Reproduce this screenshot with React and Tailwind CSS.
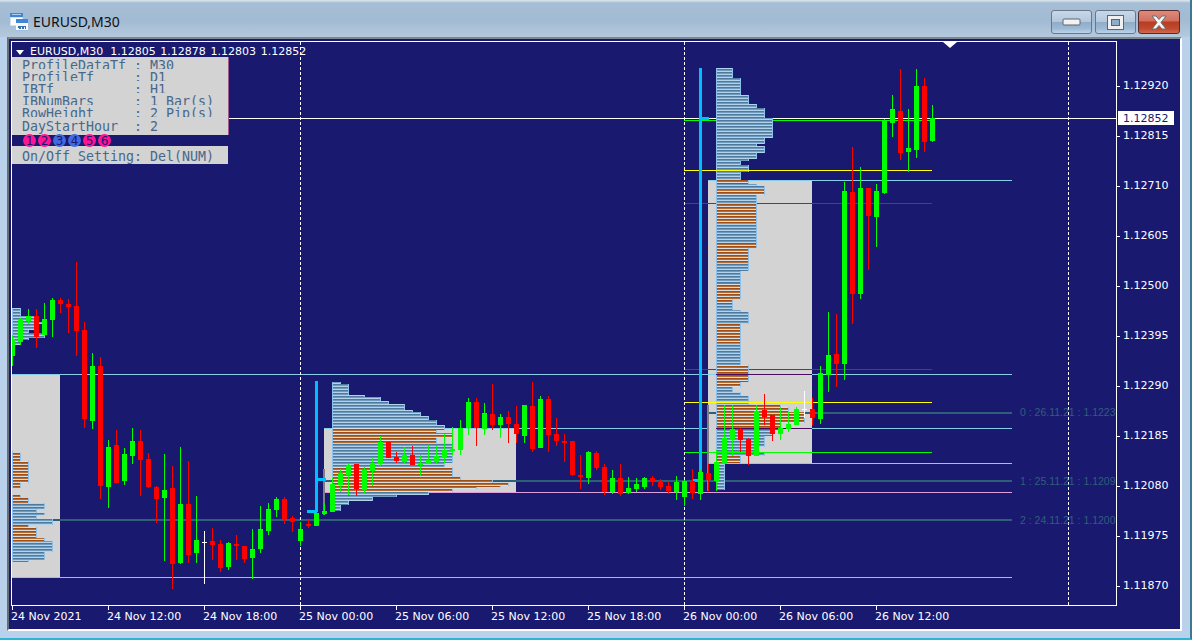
const C = [
['g',335,339,356,366],['g',318,320,342,345],['g',309,316,321,324],['r',309,316,337,348],['g',303,319,335,335],['g',298,300,320,337],['r',298,300,304,313],['r',299,304,307,333],
['r',262,306,331,356],['r',322,330,419,428],['g',353,366,421,429],['r',357,366,486,499],['g',440,447,487,508],['r',430,445,483,483],['g',448,454,481,485],['g',428,441,456,464],
['r',430,441,460,496],['r',453,459,487,488],['r',486,487,499,523],['g',454,490,498,561],['r',466,488,564,589],['g',447,504,563,564],['r',461,504,555,563],['g',496,540,553,563],
['w',531,542,543,584],['r',528,541,545,560],['r',540,544,568,572],['g',542,543,567,570],['r',535,544,546,560],['r',546,546,559,563],['g',529,549,558,579],['g',506,529,549,553],
['g',503,509,531,535],['g',497,499,510,517],['r',497,499,519,524],['r',516,518,522,532],['g',522,529,541,546],['r',520,524,526,528],['g',513,513,526,526],['g',503,511,514,515],
['g',478,484,512,512],['g',469,473,485,492],['g',463,465,475,495],['r',464,464,489,496],['g',467,470,490,493],['g',457,463,471,486],['g',436,442,464,466],['r',442,442,458,458],
['r',452,457,461,463],['g',447,455,462,464],['r',446,455,465,465],['g',455,463,465,476],['g',446,460,464,464],['g',446,456,462,464],['g',434,450,458,463],['g',427,449,451,455],
['g',420,428,450,455],['g',398,402,428,435],['r',398,402,428,446],['g',403,413,429,435],['r',384,414,425,430],['g',414,417,425,438],['r',411,417,424,443],['r',406,424,434,443],
['g',405,405,436,443],['r',382,406,449,452],['g',396,399,448,448],['r',396,399,435,452],['r',418,434,441,446],['r',434,441,443,462],['r',441,441,475,476],['r',455,475,477,489],
['g',451,452,478,484],['r',451,453,468,470],['r',464,467,492,495],['g',470,478,492,494],['r',464,478,494,496],['g',477,488,493,494],['g',478,484,489,492],['g',477,478,487,489],
['r',476,478,482,486],['r',479,481,487,490],['r',481,486,491,494],['g',476,482,492,500],['g',480,481,497,506],['r',469,481,493,499],['g',469,472,494,500],['r',464,473,480,491],
['g',450,462,481,491],['g',405,438,464,464],['g',405,429,439,456],['r',428,429,440,452],['r',438,439,456,465],['g',405,411,456,456],['r',394,410,417,425],['r',415,415,434,441],
['g',407,428,434,440],['g',412,424,429,432],['g',407,409,425,425],['w',391,409,410,418],['r',398,409,418,425],['g',366,373,419,424],['g',312,355,375,392],['r',314,354,364,387],
['g',182,191,364,380],['r',147,192,294,324],['g',167,188,294,299],['r',188,188,216,270],['g',184,191,217,247],['g',119,121,193,194],['g',95,109,123,137],['r',69,111,153,160],
['g',109,148,152,172],['g',69,86,150,158],['r',78,86,142,152],['g',105,118,141,142],
];
const COL = { g: '#00ff00', r: '#ff0000', w: '#ffffff' };

const RIGHT = [
[68,78,17,'s'],[78,95,25,'s'],[95,104,33,'s'],[104,108,41,'s'],[108,118,49,'s'],[118,138,57,'s'],[138,144,49,'s'],[144,146,41,'s'],[146,153,49,'s'],[153,159,41,'s'],[159,161,33,'s'],[161,165,25,'s'],[165,172,33,'s'],[172,180,25,'s'],
[180,184,33,'b'],[184,186,41,'s'],[186,190,49,'s'],[190,195,49,'b'],[195,204,41,'s'],[204,223,41,'b'],[223,243,41,'s'],[243,248,41,'b'],[248,263,33,'b'],[263,271,33,'s'],[271,283,25,'s'],[283,299,25,'b'],[299,304,17,'b'],[304,310,17,'s'],[310,312,25,'s'],[312,324,33,'s'],[324,343,25,'b'],[343,365,25,'s'],
[365,382,33,'b'],[382,387,25,'b'],[387,392,17,'s'],[392,396,25,'s'],[396,405,33,'s'],[405,407,65,'b'],[407,412,73,'b'],[412,423,89,'b'],[423,430,65,'b'],[430,436,57,'s'],[436,447,49,'s'],[447,452,41,'s'],[452,456,49,'s'],[456,463,25,'b'],[463,490,9,'s'],
];
const MID = [
[382,384,9,'s'],[384,395,17,'s'],[395,397,33,'s'],[397,401,49,'s'],[401,404,57,'s'],[404,410,73,'s'],[410,412,81,'s'],[412,416,89,'s'],[416,420,97,'s'],[420,425,105,'s'],[425,428,113,'s'],
[428,430,113,'b'],[430,433,105,'b'],[433,438,121,'b'],[438,443,105,'b'],[443,463,121,'s'],[463,467,113,'s'],[467,477,121,'b'],[477,480,129,'b'],[480,483,161,'b'],[483,486,177,'b'],[486,487,169,'b'],[487,489,145,'b'],[489,492,121,'b'],[492,495,97,'s'],[495,497,65,'s'],[497,501,41,'s'],[501,505,17,'s'],[505,511,9,'s'],
];
const LEFT = [
[308,316,9,'s'],[316,322,23,'s'],[322,324,30,'s'],[324,330,23,'s'],[330,333,17,'s'],[333,338,33,'s'],[338,340,17,'s'],[340,345,9,'s'],
[451,453,1,'b'],[453,461,9,'b'],[461,483,17,'b'],[483,488,9,'b'],[495,498,9,'b'],[498,503,17,'b'],[503,509,33,'s'],[509,513,25,'s'],[513,515,33,'s'],[515,519,25,'s'],[519,525,41,'s'],[525,527,17,'b'],[527,538,25,'b'],[538,541,33,'b'],[541,552,41,'s'],[552,560,33,'s'],[560,562,17,'s'],
];

function Profile({ x, segs }) {
  const out = [];
  segs.forEach(([a, b, w, t], k) => {
    out.push(<rect key={'o' + k} x={x} y={a} width={w} height={b - a} fill="#8dc0ea" />);
    for (let y = a; y < b; y++) {
      const m = y % 3;
      const stripe = t === 'b' ? (m === 0 ? '#a04e14' : m === 1 ? '#b56c34' : '#d9dfe4') : (m === 0 ? '#4f7a9e' : m === 1 ? '#6f9bbf' : '#b4d2ea');
      out.push(<rect key={k + '-' + y} x={x + 1} y={y} width={Math.max(w - 2, 0)} height={1} fill={stripe} />);
    }
  });
  return <g>{out}</g>;
}

const H = ({ x1, x2, y, c, h = 1 }) => <rect x={x1} y={y} width={x2 - x1} height={h} fill={c} />;
const V = ({ x, y1, y2, c, w = 1 }) => <rect x={x} y={y1} width={w} height={y2 - y1} fill={c} />;

function Chart() {
  const cyan = '#87ceeb', teal = '#2f5f78', pink = '#dda0dd', plum = '#4b0a5c', red = '#cc1020', yellow = '#ffff00', lime = '#00ff00';
  return (
    <svg width="1104" height="563" viewBox="12 42 1104 563" shapeRendering="crispEdges" className="block">
      <rect x="12" y="375" width="48" height="202" fill="#d3d3d3" />
      <rect x="324" y="428" width="192" height="64" fill="#d3d3d3" />
      <rect x="708" y="180" width="104" height="283" fill="#d3d3d3" />

      <H x1={12} x2={1116} y={118} c="#ffffff" />
      <H x1={684} x2={932} y={120} c={lime} />
      <H x1={708} x2={1012} y={412} c={teal} h={2} />
      <H x1={325} x2={1012} y={480} c={teal} h={2} />
      <H x1={12} x2={1012} y={519} c={teal} h={2} />
      <H x1={708} x2={1012} y={180} c={cyan} />
      <H x1={684} x2={932} y={203} c={red} />
      <H x1={684} x2={932} y={369} c={red} />
      <H x1={324} x2={708} y={428} c={cyan} />
      <H x1={812} x2={1012} y={428} c={cyan} />
      <H x1={708} x2={1012} y={463} c={cyan} />
      <H x1={324} x2={1012} y={492} c={pink} />
      <H x1={12} x2={1012} y={577} c={pink} />

      <Profile x={12} segs={LEFT} />
      <Profile x={332} segs={MID} />
      <Profile x={716} segs={RIGHT} />

      <H x1={12} x2={716} y={374} c={cyan} />
      <H x1={716} x2={812} y={374} c={plum} />
      <H x1={812} x2={1012} y={374} c={cyan} />
      <H x1={716} x2={812} y={428} c={plum} />
      <H x1={684} x2={932} y={170} c={yellow} />
      <H x1={684} x2={932} y={402} c={yellow} />
      <H x1={684} x2={932} y={452} c={lime} />

      <V x={323} y1={469} y2={515} c="#808080" w={2} />
      <V x={707} y1={405} y2={491} c="#808080" w={2} />
      <V x={315} y1={381} y2={512} c="#00bfff" w={3} />
      <H x1={315} x2={326} y={478} c="#00bfff" h={3} />
      <H x1={307} x2={317} y={510} c="#00bfff" h={3} />
      <V x={699} y1={68} y2={481} c="#00bfff" w={3} />
      <H x1={699} x2={709} y={117} c="#00bfff" h={3} />
      <H x1={693} x2={702} y={479} c="#00bfff" h={3} />

      {[300, 684, 1068].map((x) => (
        <line key={x} x1={x + 0.5} x2={x + 0.5} y1="42" y2="605" stroke="#ffffff" strokeWidth="1" strokeDasharray="3 2" />
      ))}

      {C.map(([c, a, b, d, e], i) => {
        const x = 12 + 8 * i;
        return (
          <g key={i} fill={COL[c]}>
            <rect x={x} y={a} width="1" height={e - a} />
            <rect x={x - 2} y={b} width="5" height={Math.max(d - b, 1)} />
          </g>
        );
      })}

      <polygon points="943,42 957,42 950,48" fill="#ffffff" shapeRendering="auto" />
    </svg>
  );
}

const mono = "font-['DejaVu_Sans_Mono',monospace] text-[13.3px] leading-[18px] text-[#46688c] whitespace-pre";
const ROWS = ['ProfileDataTf : M30', 'ProfileTf     : D1', 'IBTf          : H1', 'IBNumBars     : 1 Bar(s)', 'RowHeight     : 2 Pip(s)'];
const DOTS = [['1', 'p'], ['2', 'p'], ['3', 'b'], ['4', 'b'], ['5', 'p'], ['6', 'p']];

function Settings() {
  return (
    <div className="absolute left-0 top-[15px] w-[216px]">
      <div className="w-[217px] border-r border-[#a05a90] bg-[#d3d3d3]">
        {ROWS.map((r) => (
          <div key={r} className={`h-[12px] overflow-hidden pl-[10px] ${mono}`}>{r}</div>
        ))}
        <div className={`h-[18px] pl-[10px] pt-px ${mono}`}>{'DayStartHour  : 2'}</div>
      </div>
      <div className="flex h-[11px] items-center gap-[2px] pl-[11px]">
        {DOTS.map(([n, k]) => (
          <div
            key={n}
            className={`flex h-[13px] w-[13px] items-center justify-center rounded-full text-[12px] leading-none text-[#191970] font-['DejaVu_Sans',sans-serif] ${k === 'p' ? 'bg-[#ff1493]' : 'bg-[#4169e1]'}`}
          >
            {n}
          </div>
        ))}
      </div>
      <div className={`h-[18px] bg-[#d3d3d3] pl-[10px] pt-[2px] leading-[16px] ${mono}`}>On/Off Setting: Del(NUM)</div>
    </div>
  );
}

const PRICES = ['1.12920', '1.12815', '1.12710', '1.12605', '1.12500', '1.12395', '1.12290', '1.12185', '1.12080', '1.11975', '1.11870'];
const TIMES = ['24 Nov 2021', '24 Nov 12:00', '24 Nov 18:00', '25 Nov 00:00', '25 Nov 06:00', '25 Nov 12:00', '25 Nov 18:00', '26 Nov 00:00', '26 Nov 06:00', '26 Nov 12:00'];
const LABELS = [
  ['0 : 26.11.21 : 1.12232', 'top-[363px]'],
  ['1 : 25.11.21 : 1.12093', 'top-[432px]'],
  ['2 : 24.11.21 : 1.12005', 'top-[471px]'],
];

function WinBtn({ children, close }) {
  return (
    <div
      className={`flex h-[24px] items-center justify-center rounded-[3px] border ${
        close
          ? 'w-[42px] border-[#5a2a2a] bg-[linear-gradient(#dd8a7c_0%,#d0705e_45%,#b83c22_50%,#c04a30_80%,#d06a50_100%)]'
          : 'w-[41px] border-[#66788c] bg-[linear-gradient(#c8d8e8_0%,#b4c8dc_48%,#8fadc9_52%,#9db9d4_80%,#bcd4ea_100%)]'
      }`}
    >
      {children}
    </div>
  );
}

function TitleIcon() {
  return (
    <svg width="18" height="18" viewBox="0 0 18 18" shapeRendering="crispEdges">
      <rect x="0" y="0" width="13" height="13" fill="#cfe2f5" />
      <rect x="0" y="0" width="13" height="4" fill="#3d86d8" />
      <rect x="2" y="1" width="9" height="1" fill="#a8d0f5" />
      <rect x="1" y="5" width="11" height="7" fill="#ffffff" />
      <rect x="6" y="6" width="12" height="12" fill="#ffffff" />
      <rect x="6" y="6" width="12" height="4" fill="#3d86d8" />
      <rect x="7" y="10" width="10" height="7" fill="#f4f8fc" />
      <path d="M8 15 V13 H9 V15 H10 V13 H12 V15 H13 V13 H15 V15 H16" fill="none" stroke="#3d6ea8" strokeWidth="1" />
      <rect x="6" y="17" width="12" height="1" fill="#9cc0e4" />
    </svg>
  );
}

export default function App() {
  return (
    <div className="flex h-[640px] w-[1192px] flex-col overflow-hidden border-b-2 border-r-2 border-b-[#30b4d4] border-r-[#3a7a8c] bg-[#b9d1ea]">
      <div className="flex h-[37px] items-start justify-between bg-[linear-gradient(#dfe8f0_0px,#a6bed6_3px,#a2bad2_20px,#b4c9dd_37px)] pl-[10px] pr-[10px]">
        <div className="flex items-center gap-[5px] pt-[13px]">
          <TitleIcon />
          <span className="font-['Noto_Sans',sans-serif] text-[14px] leading-[18px] text-[#111111]">EURUSD,M30</span>
        </div>
        <div className="flex gap-[2.5px] pt-[10px]">
          <WinBtn>
            <svg width="19" height="8" viewBox="0 0 19 8"><rect x="1" y="1" width="17" height="6" rx="1" fill="#f2f2f2" stroke="#5c6470" /></svg>
          </WinBtn>
          <WinBtn>
            <svg width="18" height="16" viewBox="0 0 18 16" shapeRendering="crispEdges"><rect x="1" y="1" width="16" height="14" fill="#f0f0f0" stroke="#5c6470" /><rect x="5" y="5" width="8" height="6" fill="#8fadc9" stroke="#5c6470" /></svg>
          </WinBtn>
          <WinBtn close>
            <svg width="20" height="17" viewBox="0 0 20 17"><path d="M3 2 H7 L10 5.5 L13 2 H17 L12 8.5 L17 15 H13 L10 11.5 L7 15 H3 L8 8.5 Z" fill="#f4f4f4" stroke="#6e6e6e" strokeWidth="1" /></svg>
          </WinBtn>
        </div>
      </div>

      <div className="ml-[7px] mr-[8px] flex h-[594px] flex-col border-b-2 border-l-2 border-r-2 border-t-2 border-b-white border-l-[#686e76] border-r-white border-t-[#7e8790] bg-[#191970] pl-[2px] pt-[2px] font-['DejaVu_Sans',sans-serif] text-[11px] text-white">
        <div className="flex h-[565px]">
          <div className="relative h-[565px] w-[1106px] overflow-hidden border border-white">
            <Chart />
            <div className="absolute left-[4px] top-[3px] flex items-center whitespace-pre leading-[14px]">
              <svg width="8" height="5" viewBox="0 0 8 5" className="mr-[6px]"><polygon points="0,0 8,0 4,5" fill="#ffffff" /></svg>
              <span className="mr-[7px]">EURUSD,M30</span>
              <div className="flex gap-[4.7px]">
                <span>1.12805</span>
                <span>1.12878</span>
                <span>1.12803</span>
                <span>1.12852</span>
              </div>
            </div>
            <Settings />
            {LABELS.map(([t, top]) => (
              <div key={t} className={`absolute left-[1008px] whitespace-pre font-['Liberation_Sans',sans-serif] text-[10.5px] leading-[14px] text-[#2f5f78] ${top}`}>{t}</div>
            ))}
          </div>
          <div className="relative flex-1 pt-[20px]">
            {PRICES.map((p) => (
              <div key={p} className="flex h-[50px] items-center gap-[3px]">
                <div className="h-px w-[3px] bg-white" />
                <span className="leading-[14px]">{p}</span>
              </div>
            ))}
            <div className="absolute left-px top-[70px] h-[14px] w-[56px] bg-white pl-[5px] leading-[15px] text-[#191970]">1.12852</div>
          </div>
        </div>
        <div className="flex pl-px">
          {TIMES.map((t) => (
            <div key={t} className="w-[96px]">
              <div className="h-[4px] w-px bg-white" />
              <div className="-ml-px whitespace-pre leading-[14px]">{t}</div>
            </div>
          ))}
        </div>
      </div>
    </div>
  );
}
